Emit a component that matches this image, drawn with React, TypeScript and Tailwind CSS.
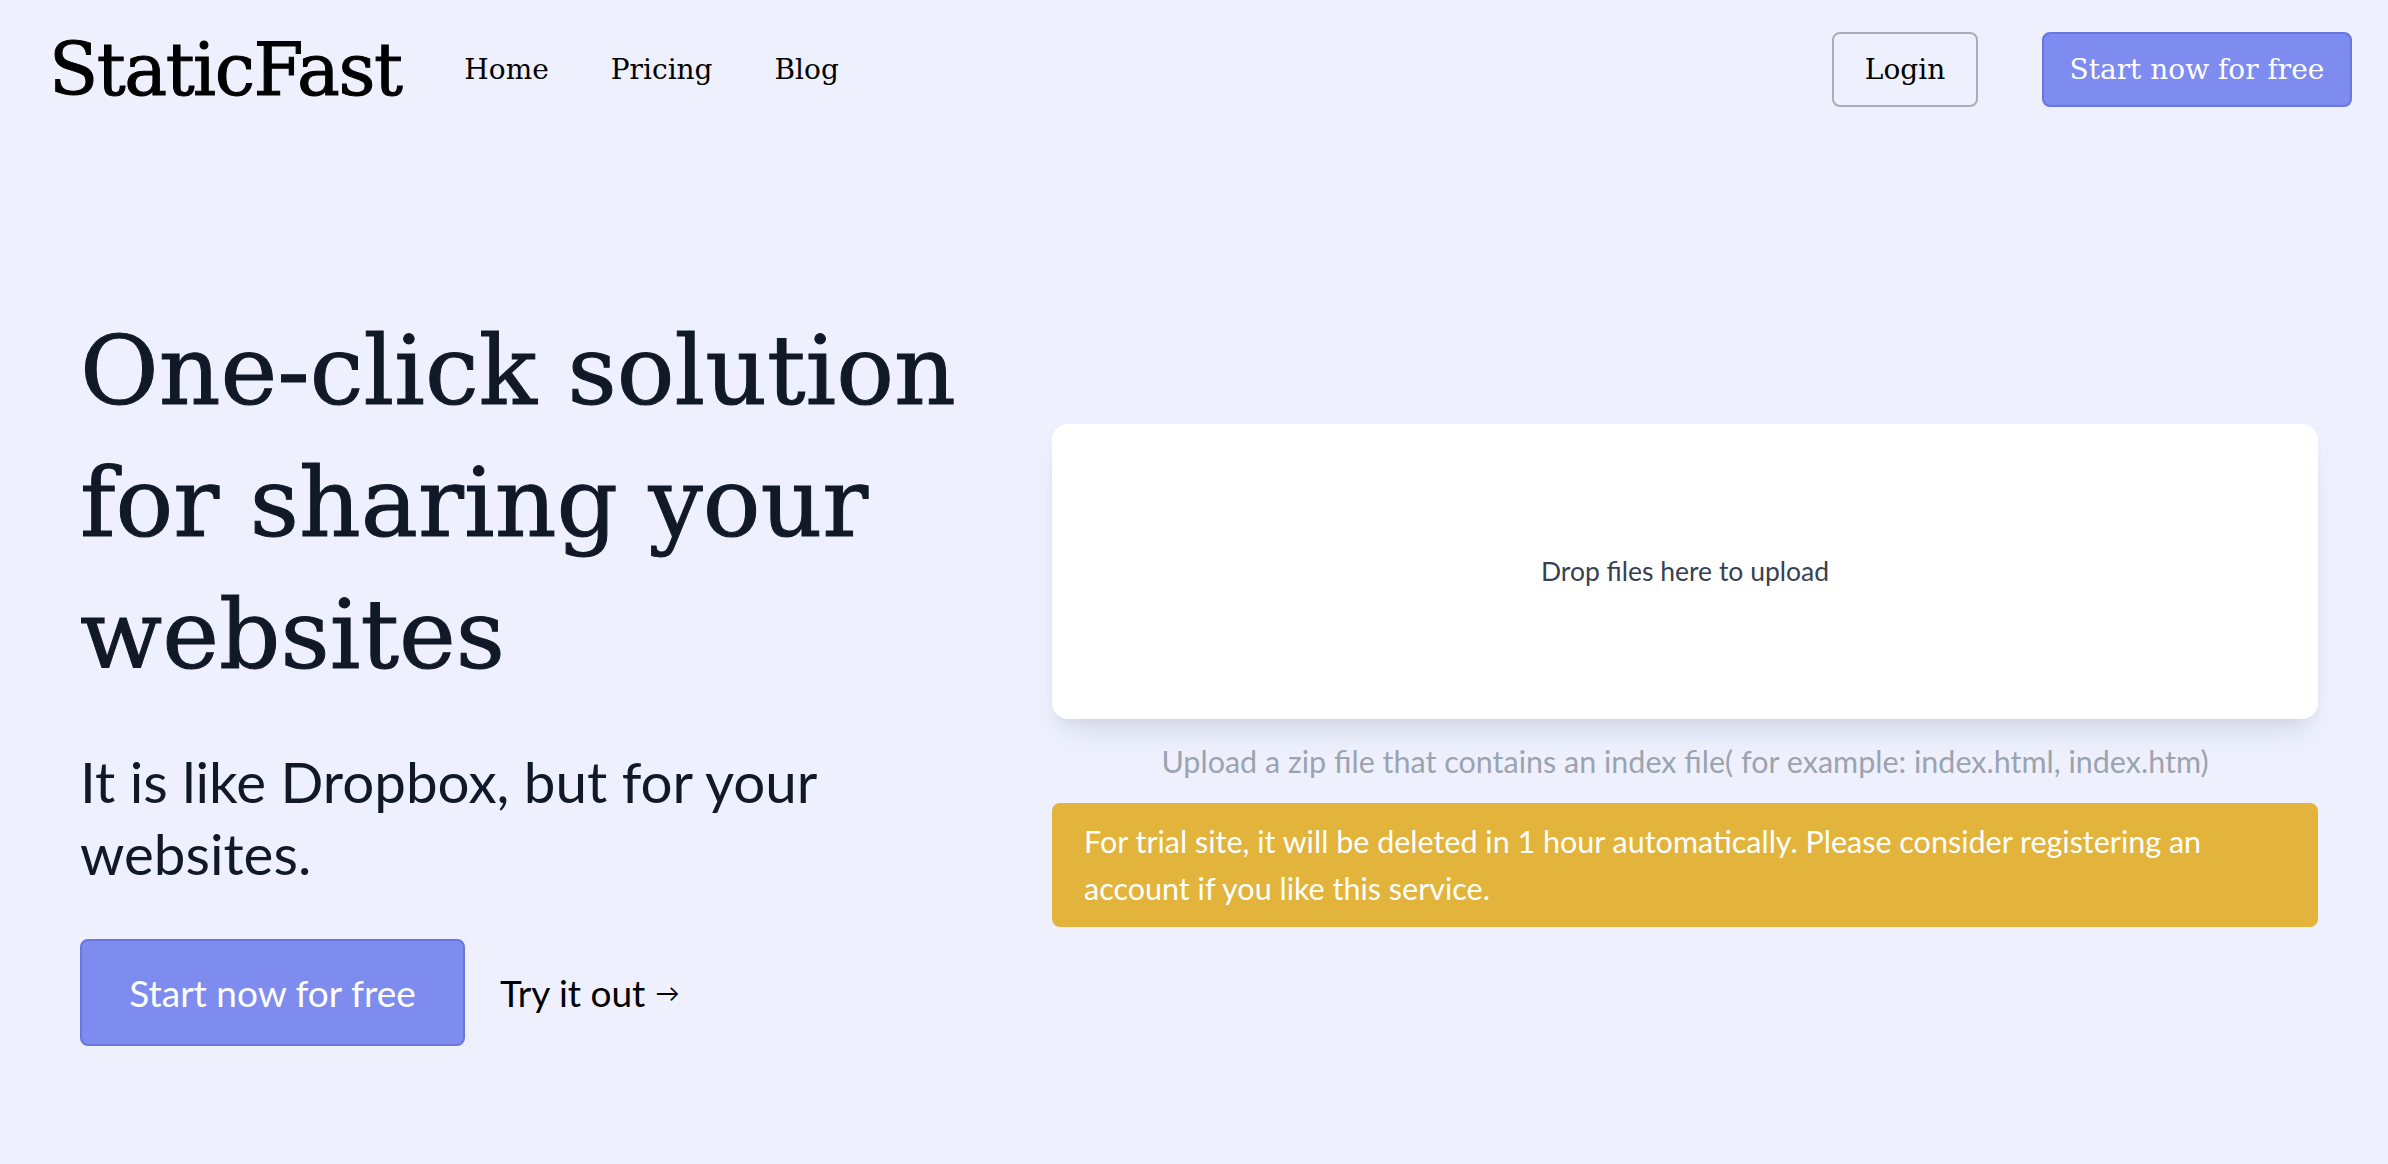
const serif = "font-['DejaVu_Serif',serif]";
const sans = "font-['Lato','Open_Sans',sans-serif]";

const Header = () => {
  return (
    <header className={`flex h-[139px] items-center justify-between pl-[49px] pr-[36px] ${serif}`}>
      <div className="flex items-center">
        <a className="text-[72px] leading-none tracking-[-1.5px] text-black [-webkit-text-stroke:1px_black]">StaticFast</a>
        <nav className="ml-[63px] flex items-center gap-[62px] text-[28px] text-black">
          <a>Home</a>
          <a>Pricing</a>
          <a>Blog</a>
        </nav>
      </div>
      <div className="flex items-center gap-[64px]">
        <button className="h-[75px] w-[146px] rounded-[8px] border-2 border-[#aaaeb9] text-[28px] text-black">
          Login
        </button>
        <button className="h-[75px] w-[310px] rounded-[8px] border-2 border-[#6a75e0] bg-[#7d8cee] text-[28px] text-white">
          Start now for free
        </button>
      </div>
    </header>
  );
};

const Hero = () => {
  return (
    <div className="flex flex-col">
      <h1 className={`text-[96px] leading-[132px] text-[#111827] [-webkit-text-stroke:1px_#111827] ${serif}`}>
        One-click solution for sharing your websites
      </h1>
      <p className={`mt-[44px] text-[56.5px] leading-[72px] text-[#111827] ${sans}`}>
        It is like Dropbox, but for your websites.
      </p>
      <div className={`mt-[50px] flex items-center ${sans}`}>
        <a className="flex h-[107px] w-[385px] items-center justify-center rounded-[8px] border-2 border-[#6a75e0] bg-[#7d8cee] text-[37px] text-white">
          Start now for free
        </a>
        <a className="ml-[35px] flex items-center text-[37px] text-black">
          Try it out <span className="ml-[10px] text-[24px]">→</span>
        </a>
      </div>
    </div>
  );
};

const Uploader = () => {
  return (
    <div className={`flex flex-col ${sans}`}>
      <div className="flex h-[295px] items-center justify-center rounded-[16px] bg-white shadow-[0_20px_30px_-10px_rgba(30,40,90,0.12),0_8px_16px_-8px_rgba(30,40,90,0.08)]">
        <span className="text-[26.5px] text-[#374151]">Drop files here to upload</span>
      </div>
      <p className="mt-[20px] text-center text-[30.5px] leading-[44px] text-[#9ca3af]">
        Upload a zip file that contains an index file( for example: index.html, index.htm)
      </p>
      <div className="mt-[20px] rounded-[8px] bg-[#e2b43c] px-[32px] py-[15px] text-[30.5px] leading-[47px] text-white">
        For trial site, it will be deleted in 1 hour automatically. Please consider registering an account if you like this
        service.
      </div>
    </div>
  );
};

export default function App() {
  return (
    <div className="min-h-[1164px] bg-[#eef1fd]">
      <Header />
      <main className="grid grid-cols-[920px_1fr] items-center gap-[52px] pl-[80px] pr-[70px] pt-[166px]">
        <Hero />
        <Uploader />
      </main>
    </div>
  );
}
